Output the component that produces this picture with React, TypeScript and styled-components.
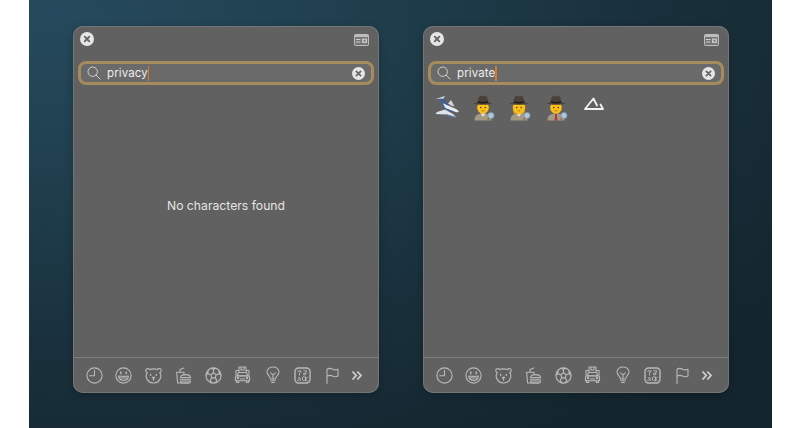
import React from "react";
import styled, { createGlobalStyle } from "styled-components";

const Global = createGlobalStyle`
  html, body { margin: 0; padding: 0; background: #fff; }
  #root { width: 800px; height: 428px; overflow: hidden; }
`;

const Page = styled.div`
  width: 800px;
  height: 428px;
  background: #fff;
  display: flex;
  justify-content: flex-start;
  padding-left: 29px;
  box-sizing: border-box;
`;

const Desktop = styled.div`
  width: 743px;
  height: 428px;
  box-sizing: border-box;
  padding: 26px 43px 35px 44px;
  display: flex;
  gap: 44px;
  background: radial-gradient(ellipse 900px 520px at 4% 2%, #264a5d 0%, #20404f 30%, #1a323e 62%, #13252e 100%);
`;

const Panel = styled.section`
  width: 306px;
  height: 367px;
  box-sizing: border-box;
  border-radius: 10px;
  background: #616161;
  box-shadow: inset 0 0 0 1px #757575, 0 2px 8px rgba(0, 0, 0, 0.22);
  display: flex;
  flex-direction: column;
  font-family: "Inter", "Liberation Sans", sans-serif;
  color: #f0f0f0;
`;

const TitleBar = styled.div`
  height: 35px;
  flex: none;
  box-sizing: border-box;
  padding: 6px 10px 0 7px;
  display: flex;
  justify-content: space-between;
  align-items: flex-start;
`;

const SearchBox = styled.div`
  flex: none;
  height: 24px;
  margin: 0 5px;
  box-sizing: border-box;
  border: 3px solid #a58b5d;
  border-radius: 8px;
  background: #6a6a6a;
  display: flex;
  align-items: center;
  padding: 0 6px 0 6px;
`;

const Query = styled.span`
  margin-left: 6px;
  font-size: 11.5px;
  font-weight: 400;
  letter-spacing: 0.1px;
  color: #eeeeee;
  line-height: 18px;
`;

const Caret = styled.i`
  display: block;
  width: 1.5px;
  height: 15px;
  background: #cf7c2c;
  flex: none;
`;

const ClearSlot = styled.span`
  margin-left: auto;
  display: flex;
`;

const Results = styled.div`
  flex: 1;
  min-height: 0;
  display: flex;
  align-items: flex-start;
  padding: 9px 0 0 9px;
  gap: 6.5px;
`;

const Empty = styled.div`
  flex: 1;
  min-height: 0;
  display: flex;
  align-items: center;
  justify-content: center;
  font-size: 12.2px;
  color: #e4e4e4;
  padding-bottom: 32px;
`;

const Glyph = styled.span`
  width: 30px;
  height: 28px;
  display: flex;
  align-items: center;
  justify-content: center;
  flex: none;
`;

const Footer = styled.footer`
  height: 36px;
  flex: none;
  box-sizing: border-box;
  border-top: 1px solid #7d7d7d;
  display: flex;
  align-items: center;
  padding: 0 0 1px 12px;
  gap: 11.8px;
`;

const Tab = styled.span<{ $narrow?: boolean }>`
  width: ${(p) => (p.$narrow ? "12px" : "18px")};
  height: 18px;
  margin-left: ${(p) => (p.$narrow ? "-2.2px" : "0")};
  display: flex;
  align-items: center;
  justify-content: center;
  color: #b9b9b9;
`;

const Ring = ({ size }: { size: number }) => (
  <svg width={size} height={size} viewBox="0 0 14 14">
    <circle cx="7" cy="7" r="7" fill="#e6e6e6" />
    <path d="M4.700 4.700l4.600 4.600M9.300 4.700l-4.600 4.600" stroke="#666" strokeWidth="1.900" strokeLinecap="round" />
  </svg>
);

const Viewer = () => (
  <svg width="15" height="12" viewBox="0 0 15 12" style={{ marginTop: 2 }}>
    <rect x="0" y="0" width="15" height="12" rx="2" fill="#bdbdbd" />
    <rect x="1" y="3" width="13" height="8" rx="0.500" fill="#757575" />
    <path d="M2 5.500h4.500M2 8h4.500" stroke="#cfcfcf" strokeWidth="1" />
    <rect x="8" y="4.500" width="5" height="4.500" fill="#c6c6c6" />
    <path d="M9 6.800l2.400-1.500v3z" fill="#757575" />
  </svg>
);

const Lens = () => (
  <svg width="14" height="14" viewBox="0 0 14 14" fill="none" stroke="#d2d2d2" strokeWidth="1">
    <circle cx="5.700" cy="5.700" r="4.700" />
    <path d="M9.100 9.100l4 4" strokeLinecap="round" />
  </svg>
);

const S = { fill: "none", stroke: "currentColor", strokeWidth: 1.100, strokeLinecap: "round", strokeLinejoin: "round" } as const;

const icons: React.ReactNode[] = [
  <svg key="clock" width="17" height="17" viewBox="0 0 17 17" {...S}>
    <circle cx="8.500" cy="8.500" r="7.600" />
    <path d="M8.500 3.200v5.600H3.800" />
  </svg>,
  <svg key="smile" width="17" height="17" viewBox="0 0 17 17" {...S}>
    <circle cx="8.500" cy="8.500" r="7.600" />
    <path d="M5.800 5v1.800M11.200 5v1.800" strokeWidth="1.400" />
    <path d="M3.600 9c1.500.5 8.300.5 9.800 0 0 2.700-2.200 4.400-4.900 4.400S3.600 11.700 3.600 9z" />
    <path d="M4.400 11h8.200" />
  </svg>,
  <svg key="bear" width="17" height="17" viewBox="0 0 17 17" {...S}>
    <path d="M4.700 2.600C3 .6.300 2 .9 4.200c.2.800.8 1.300 1.400 1.500C1.200 7.200.900 8.800 1.400 10.500 2.300 13.800 5.400 16 8.500 16s6.200-2.200 7.100-5.500c.5-1.700.2-3.300-.9-4.800.6-.2 1.200-.7 1.400-1.500.6-2.200-2.100-3.600-3.800-1.600-2-.8-5.600-.8-7.600 0z" />
    <path d="M5.700 7.500v.9M11.300 7.500v.9" strokeWidth="1.300" />
    <path d="M7.300 10.300h2.400L8.500 11.600zM8.500 11.600v1.600" />
  </svg>,
  <svg key="food" width="17" height="17" viewBox="0 0 17 17" {...S}>
    <path d="M5 5V2.500L8.800 1" />
    <path d="M1.500 5.200h7.500v2.600" />
    <path d="M1.700 5.500L2.600 16h11" />
    <path d="M5.500 10.500c0-2 2-2.900 4.700-2.900s5.300.9 5.300 2.900z" />
    <path d="M5.200 12.300h10.500M5.500 14c0 1.200.6 2 1.700 2h6.600c1.100 0 1.700-.8 1.700-2z" />
  </svg>,
  <svg key="ball" width="17" height="17" viewBox="0 0 17 17" {...S}>
    <circle cx="8.500" cy="8.500" r="7.600" />
    <path d="M8.500 5.700l2.700 2-1 3.200H6.800l-1-3.200z" />
    <path d="M8.500 5.700V3M11.200 7.700l2.600-.8M10.200 10.900l1.600 2.200M6.800 10.900l-1.600 2.200M5.800 7.700l-2.600-.8" />
    <path d="M6 1.400l2.500 1.500L11 1.400a7.600 7.600 0 0 0-5 0zM13.600 3.400l.3 3.500 2.200 1.700a7.600 7.600 0 0 0-2.500-5.200zM3.400 3.400l-.3 3.500L.9 8.600a7.600 7.600 0 0 1 2.500-5.200zM5 15.200l.2-2.100 2.300 2.900zM12 15.200l-.2-2.100L9.500 16z" fill="currentColor" strokeWidth="0.500" />
  </svg>,
  <svg key="car" width="17" height="18" viewBox="0 0 17 18" {...S}>
    <path d="M5 6.500V1h7v5.500M7 1v3h3V1M2 9V4.500h3M12 4.500h3V9" />
    <path d="M4.500 6.500h8l1.500 3.500H3z" />
    <path d="M1.500 11c0-.7.600-1.200 1.400-1.200h11.200c.8 0 1.400.5 1.400 1.200v3.800H1.500z" />
    <path d="M2.500 14.800v1.700h2.200v-1.700M12.300 14.800v1.700h2.200v-1.700M6.500 13h4" />
    <circle cx="4" cy="12" r="0.700" />
    <circle cx="13" cy="12" r="0.700" />
  </svg>,
  <svg key="bulb" width="14" height="18" viewBox="0 0 14 18" {...S}>
    <path d="M4.500 13c0-2.600-3.500-3.800-3.500-7.200C1 3 3.700 1 7 1s6 2 6 4.800C13 9.200 9.500 10.400 9.500 13z" />
    <path d="M4.700 6.800L7 8.800l2.300-2M7 8.800V13" />
    <path d="M4.800 14.700h4.400M5.700 16.500h2.600" />
  </svg>,
  <svg key="sym" width="17" height="17" viewBox="0 0 17 17" {...S} strokeWidth={1}>
    <rect x="1" y="1" width="15" height="15" rx="3.500" strokeWidth="1.400" />
    <path d="M3.800 4h3.400L5.500 6.200V8M9.700 3.500c1 .5 1.800.3 2.700 0l-.6 3.300" />
    <circle cx="10.500" cy="7" r="1" />
    <path d="M3.600 13.500c1.500 0 2.800-1.200 2.800-2S5 10 4.700 10.700c-.3.800 1 2 2.100 2.800M10.500 10c-1-.6-2-.3-2 .8v1.800c0 1 1.200 1.200 2 .7M11.500 10v3.800M13.500 10l-2 2 2 2" />
  </svg>,
  <svg key="flag" width="13" height="17" viewBox="0 0 13 17" {...S}>
    <path d="M1 16.500V2.200c2-1.200 3.800-.9 5.500 0s3.500 1 5.500 0V9c-2 1-3.800.9-5.500 0S3 8 1 9.200" />
  </svg>,
  <svg key="more" width="12" height="11" viewBox="0 0 12 11" fill="none" stroke="#d0d0d0" strokeWidth="1.800">
    <path d="M1.500 1.500l3.700 4-3.700 4M6.300 1.500l3.700 4-3.700 4" />
  </svg>,
];

const Plane = () => (
  <svg width="26" height="24" viewBox="0 0 26 24" style={{ marginTop: -2 }}>
    <path d="M5 4l4-.5 6 7-4 1z" fill="#3f5f9b" />
    <path d="M1.500 4l9.500-3-1.500 2.500z" fill="#d8dfe8" />
    <path d="M8 8l13 5.500c2.500 1.100 4 2.600 3.500 3.400-.6.900-2.500.3-5-.6L10.500 13z" fill="#e9ecef" />
    <path d="M8 8l3 5.500 9 3.800" stroke="#3a5f9f" strokeWidth="1.200" fill="none" />
    <path d="M14 8.500l3-3.500 3.500 6.500-3.500-1z" fill="#d4d9df" />
    <path d="M11 14.500l8 4.500 3.500 3.500-10.500-3-10.500-.5 1.500-2z" fill="#dfe4e9" />
    <path d="M12 19.500l10.500 3" stroke="#5a7db5" strokeWidth="1" />
  </svg>
);

const Detective = ({ long, tie }: { long?: boolean; tie?: boolean }) => (
  <svg width="24" height="26" viewBox="0 0 24 26">
    <path d="M2.500 25.500c0-5 2.500-7 8.500-7s8.500 2 8.500 7z" fill="#a49a84" />
    {tie && <path d="M10.200 18.500h1.600l.6 7h-2.800z" fill="#a63c3c" />}
    {!tie && <path d="M8.500 18.500l2.500 3.500 2.500-3.500z" fill="#e6e0d2" />}
    {long && <path d="M4.800 10c-.3 6 .7 9 2.200 9h8c1.500 0 2.500-3 2.200-9z" fill="#d99a1e" />}
    <ellipse cx="11" cy="12.500" rx="5.800" ry="6.200" fill="#fcc21b" />
    <circle cx="8.800" cy="12.600" r="0.800" fill="#5b3a10" />
    <circle cx="13.200" cy="12.600" r="0.800" fill="#5b3a10" />
    <path d="M9.300 15.800h3.400" stroke="#9a5e18" strokeWidth="0.700" />
    <path d="M1.500 8.500c2.500-.6 3.800-1 4.300-1.500C5.900 4 7 .8 8.800.8c1 0 1.300.6 2.200.6s1.200-.6 2.200-.6c1.800 0 2.900 3.200 3 6.200.5.500 1.800.9 4.300 1.500-3 1.700-15.800 1.700-18.800 0z" fill="#4a4138" />
    <path d="M5.800 6.300c3.200 1 7.200 1 10.400 0v1.400c-3.200 1-7.200 1-10.400 0z" fill="#211c18" />
    <circle cx="19" cy="20.500" r="3" fill="#a9c6e2" stroke="#8595a6" strokeWidth="0.800" />
    <path d="M17 23l-1.300 1.800" stroke="#8a6d3c" strokeWidth="1.300" />
  </svg>
);

const Triangle = () => (
  <svg width="22" height="22" viewBox="0 0 22 22" fill="none" stroke="#f2f2f2" strokeWidth="1.800" strokeLinejoin="round" strokeLinecap="round">
    <path d="M15 8.500L11.500 1.500 3 12h18l-2.500-4.500" />
  </svg>
);

const Chrome = ({ query, children }: { query: string; children: React.ReactNode }) => (
  <Panel>
    <TitleBar>
      <Ring size={14} />
      <Viewer />
    </TitleBar>
    <SearchBox>
      <Lens />
      <Query>{query}</Query>
      <Caret />
      <ClearSlot>
        <Ring size={13} />
      </ClearSlot>
    </SearchBox>
    {children}
    <Footer>
      {icons.map((icon, i) => (
        <Tab key={i} $narrow={i === icons.length - 1}>{icon}</Tab>
      ))}
    </Footer>
  </Panel>
);

export default function App() {
  return (
    <>
      <Global />
      <Page>
        <Desktop>
          <Chrome query="privacy">
            <Empty>No characters found</Empty>
          </Chrome>
          <Chrome query="private">
            <Results>
              <Glyph><Plane /></Glyph>
              <Glyph><Detective /></Glyph>
              <Glyph><Detective long /></Glyph>
              <Glyph><Detective tie /></Glyph>
              <Glyph><Triangle /></Glyph>
            </Results>
          </Chrome>
        </Desktop>
      </Page>
    </>
  );
}
